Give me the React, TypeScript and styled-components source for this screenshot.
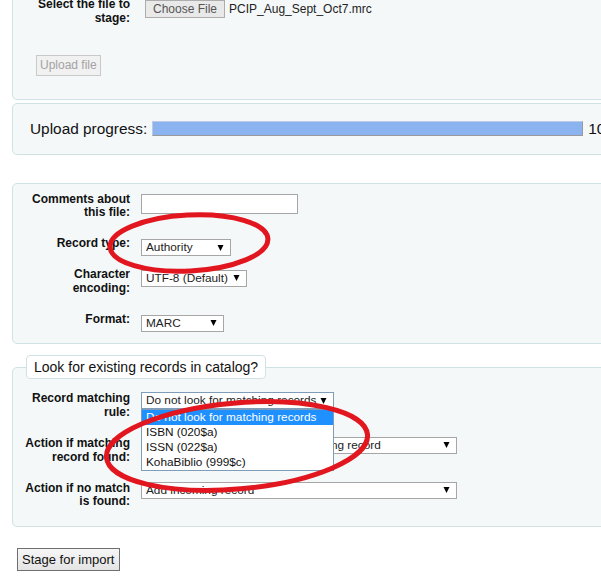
import React from 'react';
import styled, { createGlobalStyle } from 'styled-components';

const GlobalStyle = createGlobalStyle`
  html, body { margin: 0; padding: 0; overflow: hidden; background: #ffffff; }
  body { font-family: "Liberation Sans", Arial, sans-serif; font-size: 12px; color: #000; }
  *, *::before, *::after { box-sizing: border-box; }
`;

const Page = styled.div`
  position: relative;
  display: flow-root;
  width: 720px;
  height: 579px;
  padding-left: 12px;
`;

const Panel = styled.div<{ $plain?: boolean }>`
  width: 680px;
  border: 1px solid ${p => (p.$plain ? '#e3e3e3' : '#d1e2e4')};
  background: ${p => (p.$plain ? '#ffffff' : '#f4f8f9')};
  border-radius: 5px;
`;

const FilePanel = styled(Panel)`
  margin-top: -12px;
  padding: 9px 0 23px 5px;
`;

const ProgressPanel = styled(Panel)`
  margin-top: 3px;
  padding: 16px 0 17px 17px;
  display: flex;
  align-items: center;
  gap: 5px;
  font-size: 15.4px;
  line-height: 17px;
`;

const OptionsPanel = styled(Panel)`
  margin-top: 28px;
  padding: 9px 0 0 5px;
`;

const MatchFieldset = styled.fieldset`
  width: 680px;
  min-width: 0;
  margin: 11px 0 0 0;
  padding: 13px 10px 0 5px;
  border: 1px solid #d1e2e4;
  background: #f4f8f9;
  border-radius: 5px;
`;

const Legend = styled.legend`
  margin-left: 8px;
  padding: 3px 7px;
  border: 1px solid #d1e2e4;
  border-radius: 4px;
  background: #ffffff;
  font-size: 14px;
  line-height: 16px;
  color: #111;
`;

const Row = styled.div`
  display: grid;
  grid-template-columns: 112px auto;
  column-gap: 11px;
  align-items: start;
  padding-bottom: 17px;
`;

const Label = styled.label`
  font-weight: bold;
  text-align: right;
  line-height: 13.8px;
  color: #111;
`;

const Field = styled.div<{ $top?: number; $indent?: number }>`
  display: flex;
  align-items: center;
  gap: 4px;
  margin: ${p => p.$top ?? 2}px 0 -8px ${p => p.$indent ?? 0}px;
`;

const Combo = styled.div`
  position: relative;
`;

const ChooseButton = styled.button`
  height: 18px;
  padding: 0 7px;
  font: 12px/14px "Liberation Sans", Arial, sans-serif;
  color: #555;
  background: #e9e9e9;
  border: 1px solid #adadad;
  border-radius: 0;
`;

const FileName = styled.span`
  font-size: 12px;
  color: #222;
`;

const Actions = styled.div`
  margin-top: 12px;
  padding-left: 18px;
`;

const UploadButton = styled.button`
  padding: 2px 3px;
  font: 12px/15px "Liberation Sans", Arial, sans-serif;
  color: #a3a3a3;
  background: #f1f1f1;
  border: 1px solid #c9c9c9;
  border-radius: 0;
`;

const ProgressText = styled.span`
  white-space: nowrap;
  color: #111;
`;

const ProgressBar = styled.div`
  width: 431px;
  height: 15px;
  flex: none;
  background: #8ab3ef;
  border: 1px solid;
  border-color: #bccbe3 #9a9a9a #9a9a9a #bccbe3;
`;

const TextInput = styled.input`
  width: 157px;
  height: 20px;
  border: 1px solid #a6a6a6;
  background: #fff;
  padding: 0 3px;
  font: 12px "Liberation Sans", Arial, sans-serif;
`;

const SelectBox = styled.div<{ $w: number; $focus?: boolean }>`
  width: ${p => p.$w}px;
  height: 17px;
  flex: none;
  display: flex;
  align-items: center;
  gap: 3px;
  padding: 0 6px 0 4px;
  border: 1px solid ${p => (p.$focus ? '#7f9db9' : '#a6a6a6')};
  background: #ffffff;
  font-size: 11.8px;
  line-height: 15px;
  color: #222;
  white-space: nowrap;
`;

const SelectText = styled.span`
  flex: 1;
  overflow: hidden;
`;

const Dropdown = styled.ul`
  position: absolute;
  top: 17px;
  left: 0;
  right: 0;
  margin: 0;
  padding: 0;
  list-style: none;
  border: 1px solid #7f9db9;
  background: #ffffff;
  z-index: 5;
`;

const DropOption = styled.li<{ $active?: boolean }>`
  height: 15px;
  line-height: 15px;
  padding-left: 4px;
  font-size: 11.8px;
  white-space: nowrap;
  overflow: hidden;
  background: ${p => (p.$active ? '#1e90ff' : '#ffffff')};
  color: ${p => (p.$active ? '#ffffff' : '#111')};
`;

const StageButton = styled.button`
  margin: 21px 0 0 5px;
  padding: 3px 4px;
  font: 13px/15px "Liberation Sans", Arial, sans-serif;
  color: #111;
  background: linear-gradient(#f6f6f6, #e4e4e4);
  border: 1px solid #6f6f6f;
  border-radius: 0;
`;

const Annotations = styled.svg`
  position: absolute;
  top: 0;
  left: 0;
  width: 601px;
  height: 579px;
  pointer-events: none;
  z-index: 20;
`;

const Arrow = () => (
  <svg width="7" height="6" viewBox="0 0 7 6" style={{ flex: 'none' }}>
    <polygon points="0.5,0 6.5,0 3.5,6" fill="#000" />
  </svg>
);

const Select = ({ w, text, focus }: { w: number; text: string; focus?: boolean }) => (
  <SelectBox $w={w} $focus={focus}>
    <SelectText>{text}</SelectText>
    <Arrow />
  </SelectBox>
);

const matchOptions = [
  'Do not look for matching records',
  'ISBN (020$a)',
  'ISSN (022$a)',
  'KohaBiblio (999$c)',
];

export default function App() {
  return (
    <>
      <GlobalStyle />
      <Page>
        <FilePanel>
          <Row>
            <Label>Select the file to stage:</Label>
            <Field $indent={4}>
              <ChooseButton>Choose File</ChooseButton>
              <FileName>PCIP_Aug_Sept_Oct7.mrc</FileName>
            </Field>
          </Row>
          <Actions>
            <UploadButton disabled>Upload file</UploadButton>
          </Actions>
        </FilePanel>

        <ProgressPanel>
          <ProgressText>Upload progress:</ProgressText>
          <ProgressBar />
          <ProgressText>100%</ProgressText>
        </ProgressPanel>

        <OptionsPanel>
          <Row>
            <Label>Comments about this file:</Label>
            <Field $top={1}>
              <TextInput />
            </Field>
          </Row>
          <Row>
            <Label>Record type:</Label>
            <Field>
              <Select w={90} text="Authority" />
            </Field>
          </Row>
          <Row>
            <Label>Character encoding:</Label>
            <Field>
              <Select w={106} text="UTF-8 (Default)" />
            </Field>
          </Row>
          <Row>
            <Label>Format:</Label>
            <Field>
              <Select w={83} text="MARC" />
            </Field>
          </Row>
        </OptionsPanel>

        <MatchFieldset>
          <Legend>Look for existing records in catalog?</Legend>
          <Row>
            <Label>Record matching rule:</Label>
            <Field $top={0}>
              <Combo>
                <Select w={193} text="Do not look for matching records" focus />
                <Dropdown>
                  {matchOptions.map((o, i) => (
                    <DropOption key={o} $active={i === 0}>{o}</DropOption>
                  ))}
                </Dropdown>
              </Combo>
            </Field>
          </Row>
          <Row>
            <Label>Action if matching record found:</Label>
            <Field $top={0}>
              <Select w={316} text="Replace existing record with incoming record" />
            </Field>
          </Row>
          <Row>
            <Label>Action if no match is found:</Label>
            <Field $top={0}>
              <Select w={316} text="Add incoming record" />
            </Field>
          </Row>
        </MatchFieldset>

        <StageButton>Stage for import</StageButton>

        <Annotations viewBox="0 0 601 579">
          <ellipse cx="189" cy="243" rx="79" ry="28" fill="none" stroke="#e2161f" strokeWidth="5" transform="rotate(-3 189 243)" />
          <ellipse cx="237" cy="446" rx="131" ry="43" fill="none" stroke="#e2161f" strokeWidth="5" transform="rotate(-5 237 446)" />
        </Annotations>
      </Page>
    </>
  );
}
